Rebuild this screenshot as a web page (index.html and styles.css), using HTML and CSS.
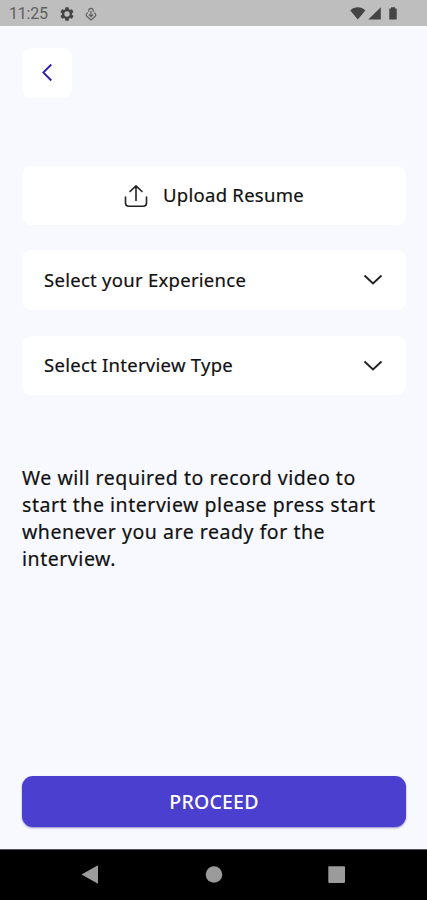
FILE: index.html
```html
<!DOCTYPE html>
<html lang="en">
<head>
<meta charset="utf-8">
<title>Interview</title>
<link rel="stylesheet" href="styles.css">
</head>
<body>
<div class="screen">
  <header class="status">
    <span class="time">11:25</span>
    <svg class="gear" width="16" height="16" viewBox="0 0 24 24"><path fill="#444" fill-rule="evenodd" d="M19.4 13a7.500 7.500 0 0 0 0-2l2.100-1.650a.5.5 0 0 0 .12-.64l-2-3.460a.5.5 0 0 0-.61-.22l-2.490 1a7.300 7.300 0 0 0-1.690-.98l-.38-2.650A.49.49 0 0 0 14 2h-4a.49.49 0 0 0-.49.42l-.38 2.650c-.61.25-1.170.59-1.690.98l-2.490-1a.5.5 0 0 0-.61.22l-2 3.460a.49.49 0 0 0 .12.64L4.570 11a7.900 7.900 0 0 0 0 2l-2.110 1.650a.5.5 0 0 0-.12.64l2 3.460c.12.22.39.3.61.22l2.490-1c.52.4 1.080.73 1.690.98l.38 2.650c.03.24.24.42.49.42h4c.25 0 .46-.18.49-.42l.38-2.650c.61-.25 1.170-.59 1.690-.98l2.490 1c.23.09.49 0 .61-.22l2-3.460a.5.5 0 0 0-.12-.64zM12 16a4 4 0 1 1 0-8 4 4 0 0 1 0 8z"/></svg>
    <svg class="sync" width="12" height="14" viewBox="0 0 12 14" fill="none" stroke="#606060" stroke-width="1.200"><path d="M3.700 4.800V3.600a2.300 2.300 0 1 1 4.600 0v1.200M6 4v5.500M3.900 7.500 6 9.600l2.100-2.100M3 5.800C.8 6.500.8 8.600 2 9.500L6 12.900l4-3.400c1.200-.9 1.200-3-1-3.700"/></svg>
    <svg class="signals" width="48" height="16" viewBox="0 0 48 16" fill="#444"><path d="M.3 4.400C4.300.3 11.300.3 15.300 4.400L7.800 13.500zM18.300 13.500 30.800 1.200v12.300zM39.300 2.600H41V1.200h4v1.400h1.700v10.900h-7.400z"/></svg>
  </header>
  <main class="content">
    <button class="back" aria-label="Back"><svg width="12" height="20" viewBox="0 0 12 20" fill="none" stroke="#291bb5" stroke-width="1.800"><path d="M10.300 1.500 2.300 9.500l8 8"/></svg></button>
    <button class="card upload">
      <svg width="24" height="24" viewBox="0 0 24 24" fill="none" stroke="#222" stroke-width="1.600" stroke-linecap="round" stroke-linejoin="round"><path d="M12 16.500V2M6 7.500 12 1.800l6 5.700M1.500 13v6c0 2 1.200 3.200 3.200 3.200h14.600c2 0 3.200-1.200 3.200-3.200v-6"/></svg>
      <span class="label label-upload">Upload Resume</span>
    </button>
    <button class="card select experience">
      <span class="label label-experience">Select your Experience</span>
      <svg width="20" height="12" viewBox="0 0 20 12" fill="none" stroke="#222" stroke-width="1.900"><path d="m1.500 1.500 8.500 8 8.500-8"/></svg>
    </button>
    <button class="card select type">
      <span class="label label-type">Select Interview Type</span>
      <svg width="20" height="12" viewBox="0 0 20 12" fill="none" stroke="#222" stroke-width="1.900"><path d="m1.500 1.500 8.500 8 8.500-8"/></svg>
    </button>
    <p class="note">We will required to record video to<br>start the interview please press start<br>whenever you are ready for the<br>interview.</p>
    <button class="proceed">PROCEED</button>
  </main>
  <nav class="navbar">
    <svg width="427" height="50" viewBox="0 1 427 50" fill="#9b9b9b"><path d="M81.500 25.500 98 16.200v18.600z"/><circle cx="214" cy="25.500" r="8.300"/><rect x="328.300" y="17.200" width="16.700" height="16.700" rx=".8"/></svg>
  </nav>
</div>
</body>
</html>
```
FILE: styles.css
```css
* { box-sizing: border-box; }
body { margin: 0; font-family: "Noto Sans", sans-serif; color: #111; }
button { border: 0; padding: 0; font: inherit; color: inherit; }
svg { display: block; flex: none; }
.screen { width: 427px; height: 900px; display: flex; flex-direction: column; background: #f8f9ff; }
.status { height: 26px; flex: none; display: flex; align-items: center; padding: 2px 29px 0 9px; background: #bebebe; }
.time { width: 40px; font: 16px/22px Roboto, sans-serif; letter-spacing: -.2px; color: #606060; white-space: nowrap; }
.gear { margin-left: 10px; }
.sync { margin-left: 10px; }
.signals { margin-left: auto; }
.content { flex: 1; display: flex; flex-direction: column; padding: 22px 21px 22px 22px; }
.back { width: 50px; height: 50px; display: flex; align-items: center; justify-content: center; border-radius: 9px; background: #fff; }
.card { display: flex; align-items: center; border-radius: 9px; background: #fff; }
.upload { height: 59px; margin-top: 68px; justify-content: center; gap: 15px; }
.select { justify-content: space-between; padding: 0 23px 0 22px; }
.experience { height: 60px; margin-top: 25px; }
.type { height: 59px; margin-top: 26px; }
.label { font-size: 18.5px; font-weight: 400; line-height: 26px; letter-spacing: .27px; -webkit-text-stroke: .2px #111; white-space: nowrap; }
.label-upload, .label-type { margin-bottom: 2px; }
.note { margin: 69px 0 0; font-size: 19.5px; font-weight: 400; line-height: 27px; letter-spacing: .54px; -webkit-text-stroke: .2px #111; white-space: nowrap; }
.proceed { height: 51px; margin-top: auto; border-radius: 11px; background: #4b3fcf; color: #fff; font-size: 19.5px; font-weight: 500; letter-spacing: .2px; box-shadow: 0 1px 2px #8d88c4; }
.navbar { height: 51px; flex: none; background: #000; border-top: 1px solid #555; }
```
